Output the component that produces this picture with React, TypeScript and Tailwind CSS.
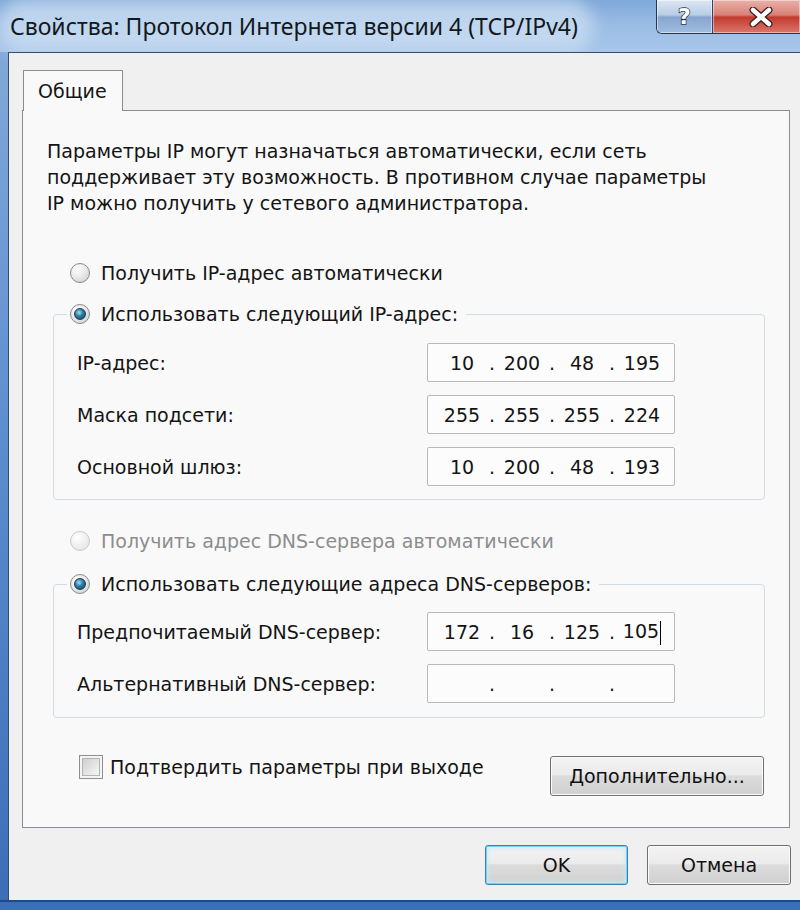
import clsx from "clsx";
import type { ReactNode } from "react";

type IpValue = [string, string, string, string];

const Radio = ({ checked, disabled }: { checked?: boolean; disabled?: boolean }) => (
  <span
    className={clsx(
      "flex h-[20px] w-[20px] shrink-0 items-center justify-center rounded-full border",
      disabled
        ? "border-[#c9c9c9] bg-[radial-gradient(circle_at_35%_30%,#ffffff,#ececec_60%,#e0e0e0)]"
        : "border-[#8a8b8c] bg-[radial-gradient(circle_at_35%_30%,#ffffff,#e2e2e2_60%,#c4c4c4)]"
    )}
  >
    {checked && (
      <span className="h-[12px] w-[12px] rounded-full border border-[#1d3f57] bg-[radial-gradient(circle_at_40%_35%,#9fe0f5,#2a7aa3_45%,#123a55)]" />
    )}
  </span>
);

const RadioRow = ({
  label,
  checked,
  disabled,
}: {
  label: string;
  checked?: boolean;
  disabled?: boolean;
}) => (
  <div className="flex h-[30px] items-center gap-[11px]">
    <Radio checked={checked} disabled={disabled} />
    <span className={disabled ? "text-[#8d8d8d]" : ""}>{label}</span>
  </div>
);

const IpField = ({ value, caret }: { value?: IpValue; caret?: boolean }) => {
  const parts = value ?? ["", "", "", ""];
  return (
    <div className="flex h-[39px] w-[248px] items-center rounded-[2px] border border-[#b6b9be] bg-[#fcfcfc] pl-[8px]">
      {parts.map((part, i) => (
        <div key={i} className="flex items-center">
          {i > 0 && <span className="w-[8px] text-center">.</span>}
          <span className="w-[52px] text-center">
            {part}
            {caret && i === 3 && (
              <span className="ml-[1px] inline-block h-[24px] w-0 border-l border-black align-middle" />
            )}
          </span>
        </div>
      ))}
    </div>
  );
};

const GroupBox = ({ legend, children }: { legend: ReactNode; children: ReactNode }) => (
  <fieldset className="ml-[30px] w-[712px] rounded-[4px] border border-[#d3dce3]">
    <legend className="ml-[13px] px-[3px] pr-[8px]">{legend}</legend>
    {children}
  </fieldset>
);

const WinButton = ({
  children,
  className,
  isDefault,
}: {
  children: ReactNode;
  className?: string;
  isDefault?: boolean;
}) => (
  <button
    className={clsx(
      "flex items-center justify-center rounded-[3px] border bg-[linear-gradient(#f3f3f3,#ebebeb_46%,#dcdcdc_50%,#d0d0d0)] text-[#111]",
      isDefault
        ? "border-[#3c7fb1] shadow-[inset_0_0_0_1px_#7fd0ef,inset_0_0_4px_2px_#c4ecfa]"
        : "border-[#707070] shadow-[inset_0_0_0_1px_#fbfbfb]",
      className
    )}
  >
    {children}
  </button>
);

const ipRows: { label: string; value: IpValue }[] = [
  { label: "IP-адрес:", value: ["10", "200", "48", "195"] },
  { label: "Маска подсети:", value: ["255", "255", "255", "224"] },
  { label: "Основной шлюз:", value: ["10", "200", "48", "193"] },
];

export default function App() {
  return (
    <div className="flex h-[910px] w-[800px] flex-col overflow-hidden bg-linear-to-b from-[#86acdb] via-[#5a8dcd] to-[#3a6fb8] font-['DejaVu_Sans',sans-serif] text-[19px] leading-[26px] text-[#141414]">
      {/* title bar */}
      <div className="flex h-[52px] shrink-0 items-start bg-linear-to-b from-[#7fa8d9] via-[#9cbde4] to-[#a7c6ea]">
        <div className="ml-[10px] mt-[11px] rounded-full bg-[#d0e1f3]/70 pr-[4px] font-['Noto_Sans',sans-serif] text-[23px] leading-[30px] text-[#101820] shadow-[0_0_16px_12px_rgba(208,225,243,0.7)]">
          Свойства: Протокол Интернета версии 4 (TCP/IPv4)
        </div>
        <div className="ml-auto flex h-[34px] overflow-hidden rounded-bl-[6px] border-b border-l border-[#24364f]">
          <div className="flex w-[56px] items-center justify-center border-r border-[#2f4563] bg-[linear-gradient(#dce7f4,#b9cde6_45%,#86a4cf_52%,#a2bde0)] shadow-[inset_0_0_0_1px_rgba(255,255,255,0.5)]">
            <span className="font-['DejaVu_Sans',sans-serif] text-[22px] font-bold leading-none text-white [-webkit-text-stroke:1.5px_#27364a] [paint-order:stroke_fill]">
              ?
            </span>
          </div>
          <div className="flex w-[87px] items-center justify-center pl-[8px] bg-[linear-gradient(#eab0a9,#d98277_45%,#c33a2e_52%,#d9776c)] shadow-[inset_0_0_0_1px_rgba(255,255,255,0.45)]">
            <svg width="24" height="20" viewBox="0 0 24 20">
              <path d="M4 3 L20 17 M20 3 L4 17" stroke="#3a1f1c" strokeWidth="7" strokeLinecap="round" />
              <path d="M4 3 L20 17 M20 3 L4 17" stroke="#ffffff" strokeWidth="4.5" strokeLinecap="round" />
            </svg>
          </div>
        </div>
      </div>

      {/* client area */}
      <div className="ml-[8px] flex h-[848px] w-[792px] shrink-0 flex-col border-l border-t border-[#3b4c66] bg-[#f0f0f0]">
        {/* tab header */}
        <div className="relative z-10 -mb-[1px] ml-[14px] mt-[17px] flex h-[41px] w-[100px] items-center border border-b-0 border-[#898c95] bg-[#f9f9f9] pl-[14px]">
          Общие
        </div>

        {/* tab panel */}
        <div className="ml-[13px] flex h-[718px] w-[768px] flex-col border border-[#898c95] bg-[#f9f9f9]">
          <p className="ml-[24px] mt-[27px]">
            Параметры IP могут назначаться автоматически, если сеть
            <br />
            поддерживает эту возможность. В противном случае параметры
            <br />
            IP можно получить у сетевого администратора.
          </p>

          <div className="ml-[47px] mt-[42px]">
            <RadioRow label="Получить IP-адрес автоматически" />
          </div>

          <div className="mt-[11px]">
            <GroupBox legend={<RadioRow label="Использовать следующий IP-адрес:" checked />}>
              <div className="grid grid-cols-[350px_248px] gap-y-[13px] pb-[13px] pl-[23px] pt-[14px]">
                {ipRows.map((row) => (
                  <div key={row.label} className="contents">
                    <div className="flex items-center">{row.label}</div>
                    <IpField value={row.value} />
                  </div>
                ))}
              </div>
            </GroupBox>
          </div>

          <div className="ml-[47px] mt-[26px]">
            <RadioRow label="Получить адрес DNS-сервера автоматически" disabled />
          </div>

          <div className="mt-[13px]">
            <GroupBox legend={<RadioRow label="Использовать следующие адреса DNS-серверов:" checked />}>
              <div className="grid grid-cols-[350px_248px] gap-y-[13px] pb-[14px] pl-[23px] pt-[13px]">
                <div className="flex items-center">Предпочитаемый DNS-сервер:</div>
                <IpField value={["172", "16", "125", "105"]} caret />
                <div className="flex items-center">Альтернативный DNS-сервер:</div>
                <IpField />
              </div>
            </GroupBox>
          </div>

          <div className="ml-[56px] mr-[25px] mt-[36px] flex items-start justify-between">
            <div className="flex items-center gap-[7px]">
              <span className="flex h-[24px] w-[24px] items-center justify-center border border-[#8e8f8f] bg-[#f4f4f4]">
                <span className="h-[18px] w-[18px] border border-[#b4b4b4] bg-[linear-gradient(135deg,#cfcfcf,#f6f6f6)]" />
              </span>
              <span>Подтвердить параметры при выходе</span>
            </div>
            <WinButton className="mt-[2px] h-[40px] w-[214px]">Дополнительно...</WinButton>
          </div>
        </div>

        {/* dialog buttons */}
        <div className="mr-[9px] mt-[17px] flex justify-end gap-[19px]">
          <WinButton isDefault className="h-[40px] w-[143px]">
            OK
          </WinButton>
          <WinButton className="h-[40px] w-[144px]">Отмена</WinButton>
        </div>
      </div>
      <div className="h-[2px] bg-[#1f4a8a]" />
    </div>
  );
}
